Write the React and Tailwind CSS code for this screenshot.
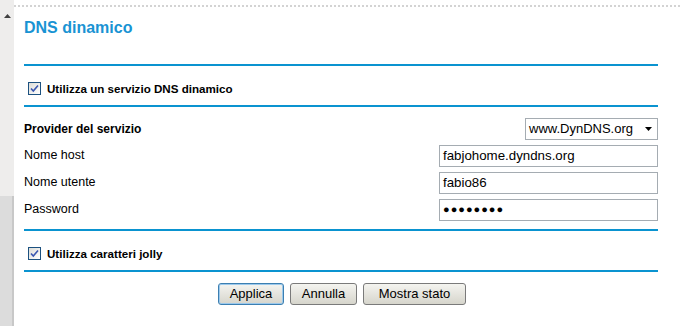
import React from 'react';

// Router "DNS dinamico" settings panel, classic admin page look.

const font = { fontFamily: '"Liberation Sans", Arial, sans-serif' };

function Rule() {
  return <div className="h-[2px] bg-[#0a93d0]" />;
}

function Check({ label }) {
  return (
    <label className="flex items-center gap-[6px] text-[11.6px] font-bold text-black">
      <span className="flex h-[13px] w-[13px] items-center justify-center border border-[#1c5180] bg-gradient-to-br from-[#dcdcd7] to-white">
        <svg width="9" height="9" viewBox="0 0 9 9">
          <path d="M1 4.5 L3.3 7 L8 1.5" fill="none" stroke="#3a56b0" strokeWidth="1.6" />
        </svg>
      </span>
      {label}
    </label>
  );
}

function Field({ label, value, password }) {
  return (
    <div className="flex h-[27px] items-center justify-between">
      <span className="text-[12.5px] text-black">{label}</span>
      <div className="flex h-[22px] w-[219px] items-center border border-[#a5acb2] bg-white px-[3px] text-[13.3px] text-black">
        {password ? <span className="text-[11px] tracking-[1px]">●●●●●●●●</span> : value}
      </div>
    </div>
  );
}

function Btn({ children, active, w }) {
  return (
    <button
      className={`h-[22px] rounded-[3px] border bg-gradient-to-b from-[#f4f4f0] to-[#d6d5cc] text-[13px] text-black ${w} ${
        active ? 'border-[#3c7fb1] shadow-[inset_0_0_0_1px_#9cc9ec]' : 'border-[#7a7a7a]'
      }`}
    >
      {children}
    </button>
  );
}

export default function App() {
  return (
    <div className="flex h-[326px] w-[680px] bg-white" style={font}>
      {/* scrollbar strip */}
      <div className="flex w-[14px] flex-col bg-[#eeedec]">
        <div className="mt-[14px] flex justify-center">
          <svg width="7" height="4" viewBox="0 0 7 4">
            <path d="M0 4 L3.5 0 L7 4 Z" fill="#404040" />
          </svg>
        </div>
        <div className="mt-[178px] flex-1 border-r-2 border-[#c8c8c8] bg-[#dcdcdc]" />
      </div>

      <div className="flex-1">
        <div className="mt-[5px] border-t-2 border-dotted border-[#d3d3d3]" />
        <div className="pl-[10px] pr-[22px]">
          <h1 className="flex h-[40px] items-center pt-[1px] text-[16px] font-bold text-[#1993d3]">
            DNS dinamico
          </h1>
          <div className="h-[17px]" />
          <Rule />
          <div className="flex h-[39px] items-center pl-[4px] pt-[6px]">
            <Check label="Utilizza un servizio DNS dinamico" />
          </div>
          <Rule />
          <div className="pt-[10px]">
            <div className="flex h-[23px] items-center justify-between">
              <span className="text-[12px] font-bold text-black">Provider del servizio</span>
              <div className="flex h-[22px] w-[133px] items-center justify-between border border-[#a5acb2] bg-white pl-[3px] pr-[5px] text-[13px] text-black">
                www.DynDNS.org
                <svg width="7" height="4" viewBox="0 0 7 4">
                  <path d="M0 0 L7 0 L3.5 4 Z" fill="#000" />
                </svg>
              </div>
            </div>
            <div className="h-[2px]" />
            <Field label="Nome host" value="fabjohome.dyndns.org" />
            <Field label="Nome utente" value="fabio86" />
            <Field label="Password" password />
          </div>
          <div className="h-[6px]" />
          <Rule />
          <div className="flex h-[39px] items-center pl-[4px] pt-[6px]">
            <Check label="Utilizza caratteri jolly" />
          </div>
          <Rule />
          <div className="mt-[11px] flex justify-center gap-[6px] pl-[2px]">
            <Btn active w="w-[66px]">Applica</Btn>
            <Btn w="w-[67px]">Annulla</Btn>
            <Btn w="w-[103px]">Mostra stato</Btn>
          </div>
        </div>
      </div>
    </div>
  );
}
